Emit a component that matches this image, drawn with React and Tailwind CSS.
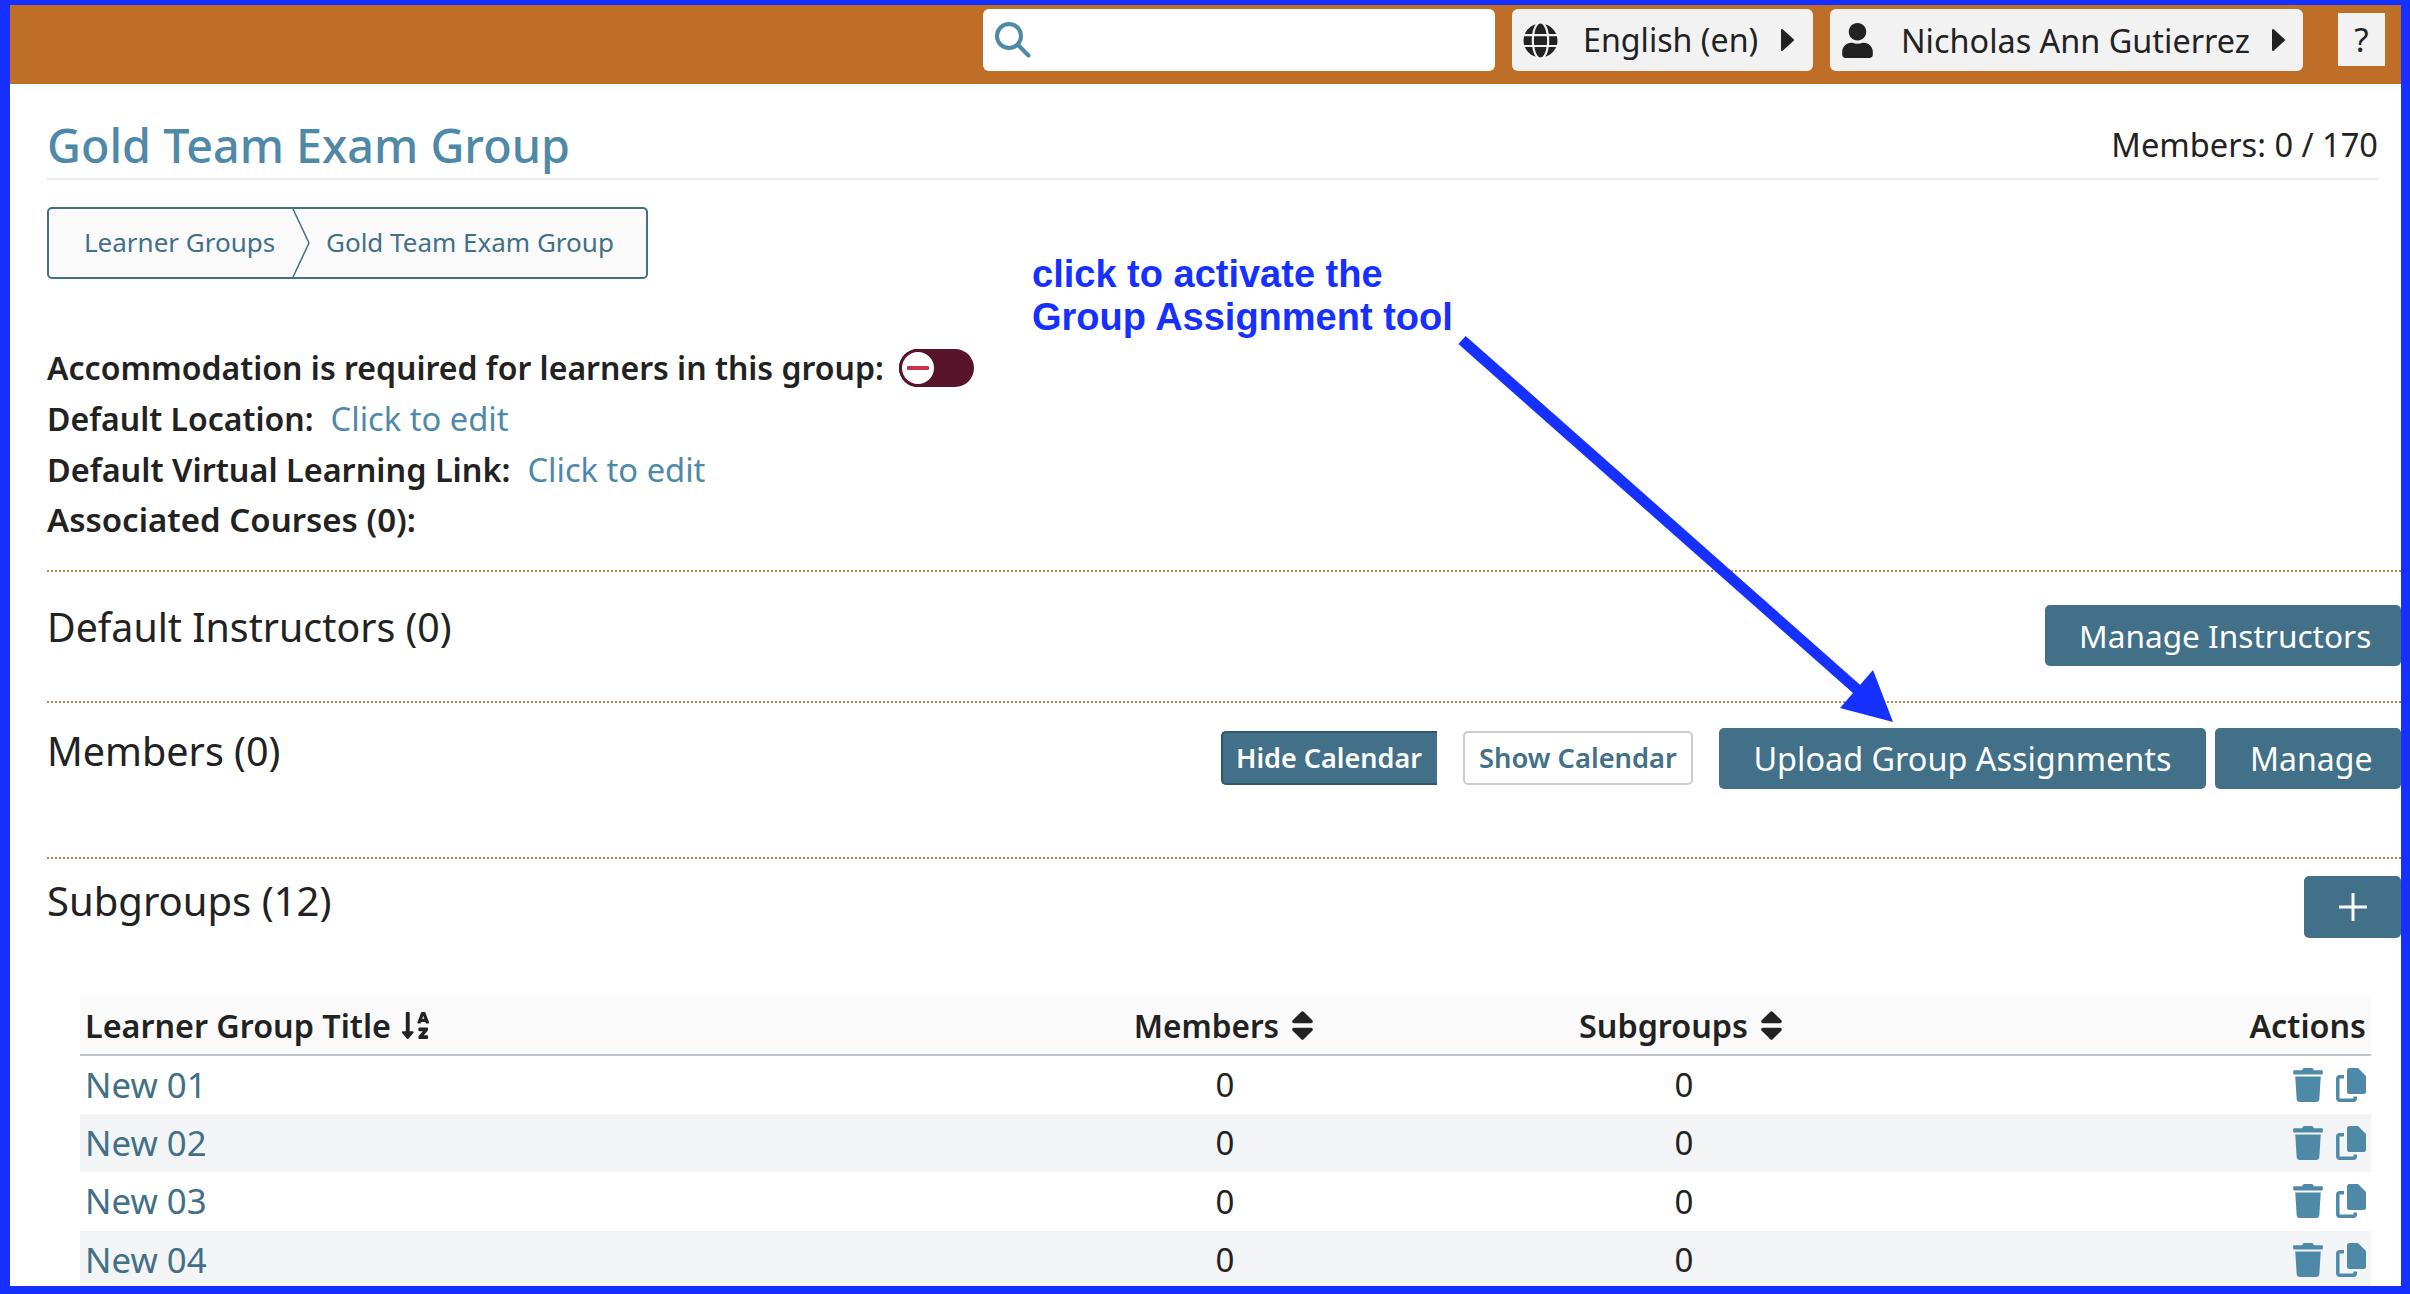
import React from "react";
import { FaGlobe, FaUser, FaSort, FaSortAlphaDown, FaTrash } from "react-icons/fa";

const rows = ["New 01", "New 02", "New 03", "New 04"];

function Caret({ className }) {
  return (
    <svg className={"w-[15px] h-[24px] shrink-0 " + className} viewBox="0 0 15 24" fill="#222222" stroke="#222222" strokeWidth="2" strokeLinejoin="round">
      <path d="M2 2 L13 12 L2 22 Z" />
    </svg>
  );
}

function CopyIcon() {
  return (
    <svg className="w-[30px] h-[34px]" viewBox="0 0 30 34" fill="none">
      <path d="M11 2.5 A2.5 2.5 0 0 1 13.5 0 H22 L30 8 V23.5 A2.5 2.5 0 0 1 27.5 26 H13.5 A2.5 2.5 0 0 1 11 23.5 Z" fill="#4e89a8" />
      <path d="M8 8.7 H3.5 A1.7 1.7 0 0 0 1.8 10.4 V30.5 A1.7 1.7 0 0 0 3.5 32.2 H17.5 A1.7 1.7 0 0 0 19.2 30.5 V28.5" stroke="#4e89a8" strokeWidth="3.5" />
    </svg>
  );
}

function TealButton({ className, children }) {
  return (
    <button className={"flex items-center bg-[#417088] text-white rounded-[5px] " + className}>
      {children}
    </button>
  );
}

export default function App() {
  return (
    <div className="relative w-[2410px] h-[1294px] overflow-hidden bg-white border-[#1530ff] border-l-[10px] border-t-[5px] border-r-[9px] border-b-[8px] text-[#222222] font-['Noto_Sans',sans-serif] box-border">
      <header className="h-[79px] bg-[#bf6e28] flex items-start">
        <div className="ml-[973px] mt-[4px] w-[512px] h-[62px] bg-white rounded-[6px] flex items-center pl-[12px]">
          <svg className="w-[36px] h-[36px]" viewBox="0 0 36 36" fill="none" stroke="#4e89a8" strokeLinecap="round">
            <circle cx="14" cy="14" r="12" strokeWidth="4" />
            <path d="M23 23 L33.5 33.5" strokeWidth="4" />
          </svg>
        </div>
        <div className="ml-[17px] mt-[4px] w-[301px] h-[62px] bg-[#f2f2f2] rounded-[6px] flex items-center pl-[11px] text-[32.2px]">
          <FaGlobe className="w-[35px] h-[35px] mr-[25px] shrink-0" />
          <span>English (en)</span>
          <Caret className="ml-[22px]" />
        </div>
        <div className="ml-[17px] mt-[4px] w-[473px] h-[62px] bg-[#f2f2f2] rounded-[6px] flex items-center pl-[12px] text-[32.4px]">
          <FaUser className="w-[31px] h-[35px] mr-[28px] shrink-0" />
          <span>Nicholas Ann Gutierrez</span>
          <Caret className="ml-[21px]" />
        </div>
        <div className="ml-[35px] mt-[8px] w-[47px] h-[53px] bg-[#f2f2f2] flex items-center justify-center text-[33px]">?</div>
      </header>

      <main className="pl-[37px]">
        <div className="mr-[23px] h-[96px] border-b-2 border-[#e8eeed] flex items-end justify-between pb-[2px]">
          <h1 className="text-[46.7px] leading-[62px] text-[#4e89a8] font-medium">Gold Team Exam Group</h1>
          <div className="text-[32.6px] leading-[50px] pb-[6px]">Members: 0 / 170</div>
        </div>

        <nav className="mt-[27px] w-[601px] h-[72px] border-2 border-[#417088] rounded-[5px] bg-[#fafafa] flex items-center text-[#417088] text-[26px] leading-[36px] pb-[2px] relative">
          <span className="ml-[35px] w-[242px]">Learner Groups</span>
          <svg className="absolute left-[243px] top-0 w-[20px] h-[68px]" viewBox="0 0 20 68" fill="none">
            <path d="M1 0 L17 34 L1 68" stroke="#417088" strokeWidth="1.5" />
          </svg>
          <span>Gold Team Exam Group</span>
        </nav>

        <div className="mt-[63px] text-[32px] font-semibold">
          <div className="h-[51px] flex items-center">
            <span>Accommodation is required for learners in this group:</span>
            <span className="ml-[15px] w-[75px] h-[38px] rounded-full bg-[#58142a] relative shrink-0">
              <span className="absolute left-0 top-0 w-[38px] h-[38px] rounded-full bg-white border-[3px] border-[#58142a] flex items-center justify-center">
                <span className="w-[22px] h-[4px] bg-[#c8324f] rounded-[1px]" />
              </span>
            </span>
          </div>
          <div className="h-[51px] flex items-center">
            <span>Default Location:</span>
            <span className="ml-[17px] font-normal text-[32.7px] text-[#4e89a8]">Click to edit</span>
          </div>
          <div className="h-[51px] flex items-center">
            <span className="text-[32.4px]">Default Virtual Learning Link:</span>
            <span className="ml-[17px] font-normal text-[32.7px] text-[#4e89a8]">Click to edit</span>
          </div>
          <div className="h-[49px] flex items-center text-[33px]">Associated Courses (0):</div>
        </div>

        <section className="mt-[26px] h-[131px] border-t-2 border-dotted border-[#c4823f] flex justify-between items-start">
          <h2 className="mt-[24px] text-[39.3px] leading-[62px]">Default Instructors (0)</h2>
          <TealButton className="mt-[33px] w-[356px] h-[61px] pl-[34px] text-[31.6px]">Manage Instructors</TealButton>
        </section>

        <section className="h-[156px] border-t-2 border-dotted border-[#c4823f] flex justify-between items-start">
          <h2 className="mt-[17px] text-[39.5px] leading-[62px]">Members (0)</h2>
          <div className="flex items-start">
            <button className="mt-[28px] w-[216px] h-[54px] bg-[#417088] border-y-2 border-l-2 border-[#33566e] rounded-l-[5px] text-white text-[27px] pr-[2px] font-semibold flex items-center justify-center">Hide Calendar</button>
            <button className="mt-[28px] ml-[26px] w-[230px] h-[54px] bg-white border-2 border-[#cccccc] rounded-[5px] text-[#417088] text-[27.3px] font-semibold flex items-center justify-center">Show Calendar</button>
            <TealButton className="mt-[25px] ml-[26px] w-[487px] h-[61px] justify-center text-[32.4px]">Upload Group Assignments</TealButton>
            <TealButton className="mt-[25px] ml-[9px] w-[186px] h-[61px] pl-[35px] text-[32px]">Manage</TealButton>
          </div>
        </section>

        <section className="h-[139px] border-t-2 border-dotted border-[#c4823f] flex justify-between items-start">
          <h2 className="mt-[11px] text-[40px] leading-[62px]">Subgroups (12)</h2>
          <TealButton className="mt-[17px] w-[97px] h-[62px] pl-[35px]">
            <svg className="w-[28px] h-[28px]" viewBox="0 0 28 28" fill="none">
              <path d="M14 1V27M1 14H27" stroke="#ffffff" strokeWidth="3" strokeLinecap="round" />
            </svg>
          </TealButton>
        </section>

        <table className="ml-[33px] w-[2291px] table-fixed border-collapse text-[34.8px]">
          <colgroup>
            <col className="w-[960px]" />
            <col className="w-[370px]" />
            <col className="w-[546px]" />
            <col className="w-[415px]" />
          </colgroup>
          <thead>
            <tr className="h-[59px] bg-[#fafafa] border-b-2 border-[#bdc4ca] text-[32.3px]">
              <th className="text-left font-semibold pl-[5px]">
                <span className="inline-flex items-center">Learner Group Title<FaSortAlphaDown className="ml-[9px] w-[31px] h-[31px]" /></span>
              </th>
              <th className="font-semibold pr-[2px]">
                <span className="inline-flex items-center text-[31.5px]">Members<FaSort className="ml-[12px] w-[23px] h-[37px]" /></span>
              </th>
              <th className="font-semibold pr-[4px]">
                <span className="inline-flex items-center">Subgroups<FaSort className="ml-[12px] w-[23px] h-[37px]" /></span>
              </th>
              <th className="text-right font-semibold pr-[5px]">Actions</th>
            </tr>
          </thead>
          <tbody>
            {rows.map((r, i) => (
              <tr key={r} className={(i % 2 ? "bg-[#f3f4f6] " : "bg-white ") + "h-[58.5px]"}>
                <td className="pl-[5px] text-[#417088]">{r}</td>
                <td className="text-center text-[33px]">0</td>
                <td className="text-center text-[33px] pl-[2px]">0</td>
                <td className="pr-[5px]">
                  <div className="flex justify-end gap-[13px] text-[#4e89a8]">
                    <FaTrash className="w-[30px] h-[34px]" />
                    <CopyIcon />
                  </div>
                </td>
              </tr>
            ))}
          </tbody>
        </table>
      </main>

      <div className="absolute left-[1022px] top-[248px] text-[38px] leading-[43px] font-bold text-[#1530ff] font-['Liberation_Sans',sans-serif]">
        click to activate the<br />Group Assignment tool
      </div>
      <svg className="absolute left-0 top-0 w-[2391px] h-[1281px] pointer-events-none" viewBox="10 5 2391 1281" fill="none">
        <path d="M1462 340 L1860 692" stroke="#1530ff" strokeWidth="11" />
        <path d="M1893 722 L1840 708 L1873 670 Z" fill="#1530ff" />
      </svg>
    </div>
  );
}
